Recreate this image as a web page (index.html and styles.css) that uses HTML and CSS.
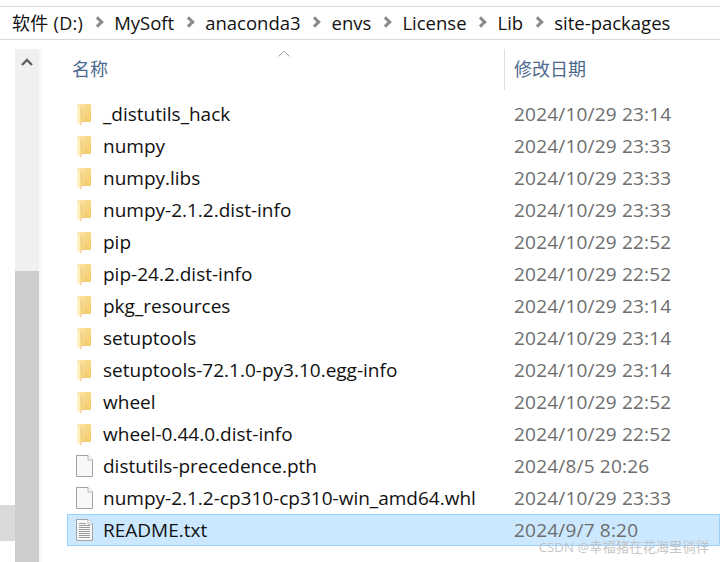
FILE: index.html
```html
<!DOCTYPE html>
<html lang="zh">
<head>
  <meta charset="UTF-8" />
  <title>site-packages</title>
  <link rel="stylesheet" href="styles.css">
</head>
<body>
  <svg class="defs" width="0" height="0">
    <defs>
      <linearGradient id="folderFill" x1="0" y1="0" x2="1" y2="1">
        <stop offset="0" stop-color="#fde8a6"/>
        <stop offset="1" stop-color="#f2c766"/>
      </linearGradient>
    </defs>
    <symbol id="folder" viewBox="0 0 18 22">
      <path d="M1 1 H15 V19 H1 Z" fill="url(#folderFill)"/>
      <path d="M9 13 H15 V19 H9 Z" fill="#f3cd70"/>
      <path d="M1 1 L5 4 V22 H4 L1 18 Z" fill="#fff0c0"/>
      <path d="M5 4 V22" stroke="#e3b65a" stroke-width=".7"/>
    </symbol>
    <symbol id="file" viewBox="0 0 18 22">
      <path d="M.5 .5 H12 L16.5 5 V21.5 H.5 Z" fill="#f7f8fa" stroke="#a3a3a3"/>
      <path d="M12 .5 V5 H16.5" fill="#fff" stroke="#b5b5b5"/>
    </symbol>
    <symbol id="textfile" viewBox="0 0 18 22">
      <path d="M.5 .5 H12 L16.5 5 V21.5 H.5 Z" fill="#f7f8fa" stroke="#a3a3a3"/>
      <path d="M12 .5 V5 H16.5" fill="#fff" stroke="#b5b5b5"/>
      <path d="M3 4.5H10M3 6.5H14M3 8.5H14M3 10.5H14M3 12.5H14M3 14.5H14M3 16.5H14M3 18.5H14" stroke="#9a9a9a"/>
    </symbol>
  </svg>

  <nav class="breadcrumb">
    <span class="drive">软件 (D:)</span><i class="chev"></i>
    <span>MySoft</span><i class="chev"></i>
    <span>anaconda3</span><i class="chev"></i>
    <span>envs</span><i class="chev"></i>
    <span>License</span><i class="chev"></i>
    <span>Lib</span><i class="chev"></i>
    <span>site-packages</span>
  </nav>

  <main class="explorer">
    <div class="gutter"><div class="gutter-thumb"></div></div>
    <div class="scrollbar">
      <svg class="scroll-up" width="12" height="8" viewBox="0 0 12 8"><path d="M1 7 L6 2 L11 7" fill="none" stroke="#606060" stroke-width="2.4"/></svg>
      <div class="scroll-thumb"></div>
    </div>
    <section class="files">
      <header class="file-head">
        <div class="col-name">名称<svg class="sort" width="12" height="7" viewBox="0 0 12 7"><path d="M.5 6.5 L6 1 L11.5 6.5" fill="none" stroke="#a0a0a0"/></svg></div>
        <div class="col-date">修改日期</div>
      </header>
      <div class="file-row"><svg class="ico"><use href="#folder"/></svg><span>_distutils_hack</span><time>2024/10/29 23:14</time></div>
      <div class="file-row"><svg class="ico"><use href="#folder"/></svg><span>numpy</span><time>2024/10/29 23:33</time></div>
      <div class="file-row"><svg class="ico"><use href="#folder"/></svg><span>numpy.libs</span><time>2024/10/29 23:33</time></div>
      <div class="file-row"><svg class="ico"><use href="#folder"/></svg><span>numpy-2.1.2.dist-info</span><time>2024/10/29 23:33</time></div>
      <div class="file-row"><svg class="ico"><use href="#folder"/></svg><span>pip</span><time>2024/10/29 22:52</time></div>
      <div class="file-row"><svg class="ico"><use href="#folder"/></svg><span>pip-24.2.dist-info</span><time>2024/10/29 22:52</time></div>
      <div class="file-row"><svg class="ico"><use href="#folder"/></svg><span>pkg_resources</span><time>2024/10/29 23:14</time></div>
      <div class="file-row"><svg class="ico"><use href="#folder"/></svg><span>setuptools</span><time>2024/10/29 23:14</time></div>
      <div class="file-row"><svg class="ico"><use href="#folder"/></svg><span>setuptools-72.1.0-py3.10.egg-info</span><time>2024/10/29 23:14</time></div>
      <div class="file-row"><svg class="ico"><use href="#folder"/></svg><span>wheel</span><time>2024/10/29 22:52</time></div>
      <div class="file-row"><svg class="ico"><use href="#folder"/></svg><span>wheel-0.44.0.dist-info</span><time>2024/10/29 22:52</time></div>
      <div class="file-row"><svg class="ico"><use href="#file"/></svg><span>distutils-precedence.pth</span><time>2024/8/5 20:26</time></div>
      <div class="file-row"><svg class="ico"><use href="#file"/></svg><span>numpy-2.1.2-cp310-cp310-win_amd64.whl</span><time>2024/10/29 23:33</time></div>
      <div class="file-row selected"><svg class="ico"><use href="#textfile"/></svg><span>README.txt</span><time>2024/9/7 8:20</time></div>
    </section>
  </main>

  <div class="watermark">CSDN @幸福猪在花海里徜徉</div>
</body>
</html>
```

FILE: styles.css
```css
html, body {
  height: 100%;
}
body {
  margin: 0;
  background: #fff;
  color: #111;
  font-family: "Open Sans", "Noto Sans CJK SC", sans-serif;
  font-size: 19px;
  overflow: hidden;
  position: relative;
  display: flex;
  flex-direction: column;
}
.defs {
  position: absolute;
}
.breadcrumb {
  margin-top: 6px;
  height: 30px;
  padding: 0 0 2px 12px;
  border-top: 1px solid #d9d9d9;
  border-bottom: 1px solid #d9d9d9;
  display: flex;
  align-items: center;
  gap: 12.5px;
  font-size: 18.5px;
  flex: none;
}
.drive {
  font-size: 18px;
  letter-spacing: .3px;
}
.chev {
  width: 5px;
  height: 5px;
  border-top: 3px solid #8a8a8a;
  border-right: 3px solid #8a8a8a;
  transform: rotate(45deg);
  margin-left: -2px;
}
.explorer {
  flex: 1;
  display: flex;
  min-height: 0;
}
.gutter {
  width: 15px;
  flex: none;
  padding-top: 465px;
}
.gutter-thumb {
  height: 36px;
  background: #d9d9d9;
}
.scrollbar {
  width: 24px;
  flex: none;
  margin-top: 9px;
  background: #f0f0f0;
  border-right: 3px solid #f7f7f7;
  position: relative;
  display: flex;
  flex-direction: column;
}
.scroll-up {
  align-self: center;
  margin-top: 9px;
}
.scroll-thumb {
  margin-top: auto;
  height: 291px;
  background: #cdcdcd;
}
.files {
  flex: 1;
  padding: 9px 0 0 25px;
}
.file-head {
  height: 41px;
  display: grid;
  grid-template-columns: 437px 1fr;
  color: #4c6a8f;
  font-size: 18px;
  margin-bottom: 8px;
}
.col-name {
  padding-left: 5px;
  line-height: 41px;
  position: relative;
}
.sort {
  position: absolute;
  left: 211px;
  top: 1px;
}
.col-date {
  border-left: 1px solid #dedede;
  padding-left: 9px;
  line-height: 41px;
}
.file-row {
  height: 32px;
  display: grid;
  grid-template-columns: 18px 411px 1fr;
  align-items: center;
  padding-left: 9px;
  box-sizing: border-box;
}
.file-row span {
  padding-left: 9px;
  white-space: nowrap;
}
.file-row time {
  margin-left: 9px;
  color: #6d6d6d;
  letter-spacing: .2px;
  white-space: nowrap;
}
.ico {
  width: 18px;
  height: 22px;
}
.selected {
  background: #cce8ff;
  border: 1px solid #99d1ff;
  padding-left: 8px;
}
.watermark {
  position: absolute;
  right: 11px;
  bottom: 6px;
  font-size: 13.3px;
  color: rgba(190, 190, 190, 0.9);
  white-space: nowrap;
}
```
